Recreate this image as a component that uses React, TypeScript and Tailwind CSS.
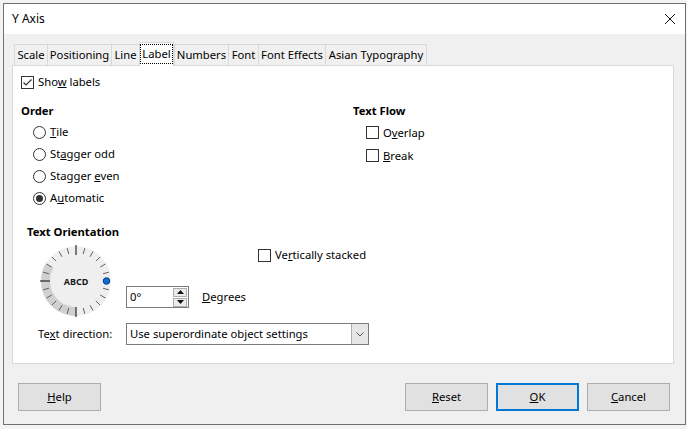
import React from "react";

function Checkbox({ checked = false }: { checked?: boolean }) {
  return (
    <span className="flex h-[13px] w-[13px] shrink-0 items-center justify-center border border-[#333333] bg-white">
      {checked && (
        <svg width="11" height="11" viewBox="0 0 11 11">
          <polyline points="1.5,5.5 4,8 9.5,2.5" fill="none" stroke="#333333" strokeWidth="1.2" />
        </svg>
      )}
    </span>
  );
}

function Radio({ checked = false }: { checked?: boolean }) {
  return (
    <span className="flex h-[13px] w-[13px] shrink-0 items-center justify-center rounded-full border border-[#333333] bg-white">
      {checked && <span className="h-[7px] w-[7px] rounded-full bg-[#333333]" />}
    </span>
  );
}

function Dial() {
  const ticks = [];
  for (let i = 1; i < 24; i++) {
    const a = (i * 15 * Math.PI) / 180;
    const major = i % 6 === 0;
    const r1 = major ? 26 : 28;
    const r2 = major ? 36 : 34;
    ticks.push(
      <line
        key={i}
        x1={37 + r1 * Math.cos(a)}
        y1={37 - r1 * Math.sin(a)}
        x2={37 + r2 * Math.cos(a)}
        y2={37 - r2 * Math.sin(a)}
        stroke={major ? "#000000" : "#5f5f5f"}
        strokeWidth="1"
      />
    );
  }
  return (
    <svg width="74" height="74" viewBox="0 0 74 74" className="shrink-0">
      <circle cx="37" cy="37" r="35" fill="#efefef" />
      <path d="M6.69 19.5 A35 35 0 0 0 37 72 L37 63 A26 26 0 0 1 14.48 24 Z" fill="#d0d0d0" />
      {ticks}
      <circle cx="67.5" cy="37" r="3.3" fill="#0a6fd6" stroke="#0b3d7a" strokeWidth="1" />
      <text
        x="37"
        y="40.5"
        textAnchor="middle"
        fontSize="9"
        fontWeight="700"
        fill="#1a1a1a"
        fontFamily="'Noto Sans', sans-serif"
      >
        ABCD
      </text>
    </svg>
  );
}

const tabs = [
  { label: "Scale", w: "w-[33px]" },
  { label: "Positioning", w: "w-[64px]" },
  { label: "Line", w: "w-[28px]" },
  { label: "Label", w: "w-[35px]", active: true },
  { label: "Numbers", w: "w-[54px]" },
  { label: "Font", w: "w-[30px]" },
  { label: "Font Effects", w: "w-[67px]" },
  { label: "Asian Typography", w: "w-[102px]", last: true },
];

function Button({ children, primary = false }: { children: React.ReactNode; primary?: boolean }) {
  return (
    <button
      className={
        primary
          ? "flex h-[28px] w-[83px] items-center justify-center border-2 border-[#0078d7] bg-[#e1e1e1]"
          : "flex h-[28px] w-[83px] items-center justify-center border border-[#adadad] bg-[#e1e1e1]"
      }
    >
      {children}
    </button>
  );
}

export default function App() {
  return (
    <div className="h-[429px] w-[687px] bg-[#f3f3f3] pl-[3px] pt-[3px] font-['Noto_Sans',sans-serif] text-[11.25px] leading-[16px] text-black">
      <div className="flex h-[422px] w-[683px] flex-col border border-[#707070] bg-[#f0f0f0]">
        {/* title bar */}
        <div className="flex h-[30px] shrink-0 items-center justify-between bg-white pl-[8px] pr-[10px]">
          <span className="text-[12px]">Y Axis</span>
          <svg width="10" height="10" viewBox="0 0 10 10">
            <path d="M0 0 L10 10 M10 0 L0 10" stroke="#111111" strokeWidth="1" />
          </svg>
        </div>

        {/* tabs */}
        <div className="flex h-[31px] items-end pl-[10px] pt-[8px]">
          {tabs.map((t) =>
            t.active ? (
              <div
                key={t.label}
                className={`${t.w} relative z-10 -mb-px flex h-[24px] shrink-0 items-start justify-center border border-b-0 border-[#d9d9d9] bg-white pt-[1px]`}
              >
                <span className="flex h-[20px] items-center border border-dotted border-black px-[1px]">{t.label}</span>
              </div>
            ) : (
              <div
                key={t.label}
                className={
                  t.last
                    ? `${t.w} flex h-[21px] shrink-0 items-center justify-center border-x border-t border-[#d9d9d9] bg-[#f0f0f0]`
                    : `${t.w} flex h-[21px] shrink-0 items-center justify-center border-l border-t border-[#d9d9d9] bg-[#f0f0f0]`
                }
              >
                {t.label}
              </div>
            )
          )}
        </div>

        {/* panel */}
        <div className="ml-[8px] h-[299px] w-[662px] border border-[#d9d9d9] bg-white">
          <div className="mt-[8px] flex h-[16px] items-center gap-[4px] pl-[8px]">
            <Checkbox checked />
            <span>
              Sho<u>w</u> labels
            </span>
          </div>

          <div className="flex">
            <div className="w-[340px]">
              <div className="mt-[13px] h-[16px] pl-[8px] font-bold">Order</div>
              <div className="mt-[2px] flex flex-col">
                <div className="flex h-[22px] items-center gap-[4px] pl-[20px]">
                  <Radio />
                  <span>
                    <u>T</u>ile
                  </span>
                </div>
                <div className="flex h-[22px] items-center gap-[4px] pl-[20px]">
                  <Radio />
                  <span>
                    St<u>a</u>gger odd
                  </span>
                </div>
                <div className="flex h-[22px] items-center gap-[4px] pl-[20px]">
                  <Radio />
                  <span>
                    Stagger <u>e</u>ven
                  </span>
                </div>
                <div className="flex h-[22px] items-center gap-[4px] pl-[20px]">
                  <Radio checked />
                  <span>
                    A<u>u</u>tomatic
                  </span>
                </div>
              </div>
            </div>
            <div>
              <div className="mt-[13px] h-[16px] font-bold">Text Flow</div>
              <div className="mt-[2px] flex flex-col">
                <div className="flex h-[23px] items-center gap-[4px] pl-[13px]">
                  <Checkbox />
                  <span>
                    O<u>v</u>erlap
                  </span>
                </div>
                <div className="flex h-[23px] items-center gap-[4px] pl-[13px]">
                  <Checkbox />
                  <span>
                    <u>B</u>reak
                  </span>
                </div>
              </div>
            </div>
          </div>

          <div className="mt-[15px] h-[16px] pl-[14px] font-bold">Text Orientation</div>

          <div className="mt-[4px] flex pl-[26px]">
            <Dial />
            <div className="ml-[13px] flex flex-col">
              <div className="ml-[132px] mt-[3px] flex h-[16px] items-center gap-[4px]">
                <Checkbox />
                <span>
                  Ve<u>r</u>tically stacked
                </span>
              </div>
              <div className="mt-[23px] flex items-center">
                <div className="flex h-[22px] w-[63px] items-center justify-between border border-[#7a7a7a] bg-white pl-[3px] pr-[1px]">
                  <span>0°</span>
                  <div className="flex flex-col">
                    <span className="flex h-[9px] w-[14px] items-center justify-center border border-[#adadad] bg-[#ececec]">
                      <svg width="7" height="4" viewBox="0 0 7 4">
                        <path d="M3.5 0 L7 4 L0 4 Z" fill="#111111" />
                      </svg>
                    </span>
                    <span className="mt-px flex h-[9px] w-[14px] items-center justify-center border border-[#adadad] bg-[#ececec]">
                      <svg width="7" height="4" viewBox="0 0 7 4">
                        <path d="M0 0 L7 0 L3.5 4 Z" fill="#111111" />
                      </svg>
                    </span>
                  </div>
                </div>
                <span className="ml-[13px]">
                  <u>D</u>egrees
                </span>
              </div>
            </div>
          </div>

          <div className="mt-[5px] flex h-[22px] items-center pl-[25px]">
            <span className="w-[88px] shrink-0">
              Te<u>x</u>t direction:
            </span>
            <div className="flex h-[22px] w-[243px] items-center justify-between border border-[#7a7a7a] bg-white pl-[3px]">
              <span>Use superordinate object settings</span>
              <span className="flex h-full w-[17px] items-center justify-center border-l border-[#adadad] bg-[#e6e6e6]">
                <svg width="8" height="5" viewBox="0 0 8 5">
                  <polyline points="0.5,0.5 4,4 7.5,0.5" fill="none" stroke="#555555" strokeWidth="1" />
                </svg>
              </span>
            </div>
          </div>
        </div>

        {/* buttons */}
        <div className="mt-[19px] flex items-center pl-[14px] pr-[15px]">
          <Button>
            <u>H</u>elp
          </Button>
          <div className="ml-auto flex gap-[8px]">
            <Button>
              <u>R</u>eset
            </Button>
            <Button primary>
              <u>O</u>K
            </Button>
            <Button>
              <u>C</u>ancel
            </Button>
          </div>
        </div>
      </div>
    </div>
  );
}
